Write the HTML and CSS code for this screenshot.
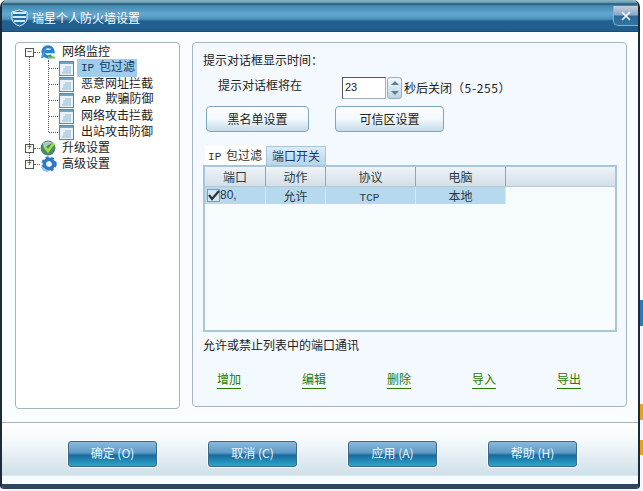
FILE: index.html
```html
<!DOCTYPE html>
<html lang="zh">

<head>
    <meta charset="UTF-8">
    <title>瑞星个人防火墙设置</title>
    <link rel="stylesheet" href="styles.css">
</head>

<body>
    <div class="window">
        <div class="titlebar">
            <svg class="title-icon" width="17" height="18" viewBox="0 0 17 18">
                <path d="M1 3 L8.5 1 L16 3 L16 10 Q15 15 8.5 17 Q2 15 1 10 Z" fill="#1f6fa8" stroke="#e8f4fb"/>
                <path d="M2 4 H15 M2 8 H15 M3 12 H14" stroke="#cfeaf8" stroke-width="2"/>
            </svg>
            <span class="title-text">瑞星个人防火墙设置</span>
            <div class="close-btn">
                <svg width="10" height="10" viewBox="0 0 10 10">
                    <path d="M1 1 L9 9 M9 1 L1 9" stroke="#fff" stroke-width="1.6"/>
                </svg>
            </div>
        </div>

        <div class="main">
            <div class="tree-panel">
                <div class="guide guide-root"></div>
                <div class="guide guide-child"></div>

                <div class="tree-row">
                    <span class="expander">−</span><span class="dots"></span>
                    <svg class="node-icon" width="18" height="16" viewBox="0 0 18 16">
                        <path d="M4 7.5 H13 A5 5 0 1 0 11.5 11.5" fill="none" stroke="#2a80d2" stroke-width="3.4"/>
                        <path d="M6 5 H11" stroke="#bfe3f8"/>
                        <path d="M1 14 Q2 8 7 3 Q4 9 3.5 14 Z" fill="#3f9bd8"/>
                        <path d="M8 12.5 H15 V14.5 H8 Z" fill="#7cc23e"/>
                    </svg>
                    <span class="node-label">网络监控</span>
                </div>
                <div class="tree-row child">
                    <span class="dots long"></span>
                    <svg class="doc-icon" width="15" height="15" viewBox="0 0 15 15"><use href="#doc"/></svg>
                    <span class="node-label selected"><span class="latin">IP</span> 包过滤</span>
                </div>
                <div class="tree-row child">
                    <span class="dots long"></span>
                    <svg class="doc-icon" width="15" height="15" viewBox="0 0 15 15"><use href="#doc"/></svg>
                    <span class="node-label">恶意网址拦截</span>
                </div>
                <div class="tree-row child">
                    <span class="dots long"></span>
                    <svg class="doc-icon" width="15" height="15" viewBox="0 0 15 15"><use href="#doc"/></svg>
                    <span class="node-label"><span class="latin">ARP</span> 欺骗防御</span>
                </div>
                <div class="tree-row child">
                    <span class="dots long"></span>
                    <svg class="doc-icon" width="15" height="15" viewBox="0 0 15 15"><use href="#doc"/></svg>
                    <span class="node-label">网络攻击拦截</span>
                </div>
                <div class="tree-row child">
                    <span class="dots long"></span>
                    <svg class="doc-icon" width="15" height="15" viewBox="0 0 15 15"><use href="#doc"/></svg>
                    <span class="node-label">出站攻击防御</span>
                </div>
                <div class="tree-row">
                    <span class="expander">+</span><span class="dots"></span>
                    <svg class="node-icon" width="18" height="16" viewBox="0 0 18 16">
                        <circle cx="8" cy="8" r="7.5" fill="#4a8a6c"/>
                        <path d="M3 3 Q8 0 13 3 Q8 4 4 9 Z" fill="#a9cfc0"/>
                        <path d="M5 7 L8 11 L14 3" fill="none" stroke="#a4e03c" stroke-width="2.6"/>
                    </svg>
                    <span class="node-label">升级设置</span>
                </div>
                <div class="tree-row">
                    <span class="expander">+</span><span class="dots"></span>
                    <svg class="node-icon" width="18" height="16" viewBox="0 0 18 16">
                        <circle cx="9" cy="8" r="4.6" fill="none" stroke="#2f78c8" stroke-width="3.6"/>
                        <circle cx="9" cy="8" r="6.6" fill="none" stroke="#2f78c8" stroke-width="2.2" stroke-dasharray="3 2.5"/>
                        <circle cx="9" cy="8" r="2.4" fill="#e8f4fc"/>
                        <path d="M2 11 Q4 15 8 15" fill="none" stroke="#8cc8f0" stroke-width="2"/>
                    </svg>
                    <span class="node-label">高级设置</span>
                </div>

                <svg class="defs" width="0" height="0">
                    <symbol id="doc" viewBox="0 0 15 15">
                        <rect x="0.5" y="0.5" width="14" height="14" fill="#e6f1f8" stroke="#4f89ad"/>
                        <rect x="1" y="1" width="13" height="2" fill="#6ea5c6"/>
                        <path d="M6 6 H12 M4.5 8 H12 M4 10 H12 M3 12 H12" stroke="#8fb6cf"/>
                    </symbol>
                </svg>
            </div>

            <div class="settings-panel">
                <div class="section-title">提示对话框显示时间：</div>

                <div class="timeout-row">
                    <span class="timeout-label">提示对话框将在</span>
                    <span class="num-input">23</span>
                    <span class="spinner">
                        <span class="spin up"></span>
                        <span class="spin down"></span>
                    </span>
                    <span class="timeout-hint">秒后关闭<span class="wide">（5-255）</span></span>
                </div>

                <div class="action-row">
                    <button class="soft-btn black">黑名单设置</button>
                    <button class="soft-btn trust">可信区设置</button>
                </div>

                <div class="tabs">
                    <div class="tab"><span class="latin">IP</span> 包过滤</div>
                    <div class="tab active">端口开关</div>
                </div>

                <div class="list">
                    <div class="list-head">
                        <div class="cell c-port">端口</div>
                        <div class="cell c-action">动作</div>
                        <div class="cell c-proto">协议</div>
                        <div class="cell c-pc">电脑</div>
                    </div>
                    <div class="list-row">
                        <div class="cell c-port left">
                            <svg class="check" width="13" height="13" viewBox="0 0 13 13">
                                <rect x="0.5" y="0.5" width="12" height="12" fill="#d5e6f2" stroke="#7d9cb3"/>
                                <path d="M2 6 L5 10 L12 2" fill="none" stroke="#26323c" stroke-width="2.2"/>
                            </svg>80,
                        </div>
                        <div class="cell c-action">允许</div>
                        <div class="cell c-proto"><span class="latin">TCP</span></div>
                        <div class="cell c-pc">本地</div>
                    </div>
                </div>

                <div class="note">允许或禁止列表中的端口通讯</div>

                <div class="links">
                    <a class="link">增加</a>
                    <a class="link">编辑</a>
                    <a class="link">删除</a>
                    <a class="link">导入</a>
                    <a class="link">导出</a>
                </div>
            </div>
        </div>

        <div class="footer">
            <button class="blue-btn">确定 (O)</button>
            <button class="blue-btn">取消 (C)</button>
            <button class="blue-btn">应用 (A)</button>
            <button class="blue-btn">帮助 (H)</button>
        </div>
    </div>
</body>

</html>
```

FILE: styles.css
```css
html,
body {
    margin: 0;
    height: 100%;
}

body {
    width: 643px;
    height: 491px;
    overflow: hidden;
    font-family: "Noto Sans CJK SC", "Liberation Sans", sans-serif;
    font-size: 12px;
    color: #222;
    background: linear-gradient(180deg,
            #ffffff 0, #ffffff 300px,
            #2f78b8 300px, #2f78b8 326px,
            #f4f8fb 326px, #f4f8fb 404px,
            #e8a020 404px, #e8a020 420px,
            #f4f8fb 420px, #f4f8fb 440px,
            #e8a020 440px, #e8a020 455px,
            #f4f8fb 455px);
}

.window {
    box-sizing: border-box;
    width: 640px;
    height: 489px;
    display: flex;
    flex-direction: column;
    background: #f9fdff;
    border: solid #1c2a38;
    border-width: 0 2px 0 2px;
    border-radius: 7px 7px 4px 4px;
    overflow: hidden;
}

.latin {
    font-family: "Liberation Mono", monospace;
    font-size: 11px;
    margin-right: 2px;
}

/* title bar */
.titlebar {
    box-sizing: border-box;
    height: 32px;
    flex: none;
    display: flex;
    align-items: center;
    padding: 5px 0 0 9px;
    border-bottom: 1px solid #1d4c70;
    background: linear-gradient(180deg,
            #8cb6c8 0, #5f97ae 3px, #1c3f58 4px,
            #3f86ae 5px, #62a8cf 14px, #4f93bd 19px,
            #22618f 21px, #1f5d8c 31px);
}

.title-icon {
    flex: none;
}

.title-text {
    margin-left: 4px;
    padding-bottom: 2px;
    color: #fff;
    font-size: 12px;
    flex: 1;
}

.close-btn {
    width: 24px;
    height: 19px;
    margin: -4px 0 0 0;
    border-radius: 0 0 0 5px;
    border: 1px solid #7fb0cc;
    border-width: 0 0 1px 1px;
    display: flex;
    align-items: center;
    justify-content: center;
    background: linear-gradient(180deg, #c7cede 0, #8da9c8 45%, #2c6a98 55%, #2f75a6 100%);
}

/* panels */
.main {
    flex: none;
    height: 390px;
    box-sizing: border-box;
    display: flex;
    align-items: flex-start;
    padding: 10px 0 0 13px;
    gap: 12px;
}

.tree-panel {
    box-sizing: border-box;
    position: relative;
    width: 165px;
    height: 367px;
    padding-top: 1px;
    background: #fff;
    border: 1px solid #a3b5c0;
    border-radius: 4px;
}

.guide {
    position: absolute;
    border-left: 1px dotted #555;
}

.guide-root {
    left: 13px;
    top: 13px;
    height: 106px;
}

.guide-child {
    left: 32px;
    top: 17px;
    height: 72px;
}

.defs {
    position: absolute;
}

.tree-row {
    height: 16px;
    display: flex;
    align-items: center;
    padding-left: 9px;
    white-space: nowrap;
}

.tree-row.child {
    padding-left: 33px;
}

.expander {
    box-sizing: border-box;
    width: 9px;
    height: 9px;
    flex: none;
    border: 1px solid #555;
    background: #fff;
    display: flex;
    align-items: center;
    justify-content: center;
    font-family: "Liberation Mono", monospace;
    font-size: 9px;
    line-height: 7px;
    color: #222;
    z-index: 1;
}

.dots {
    width: 6px;
    flex: none;
    border-top: 1px dotted #555;
}

.dots.long {
    width: 9px;
}

.node-icon {
    flex: none;
}

.doc-icon {
    flex: none;
    margin-left: 1px;
}

.node-label {
    margin-left: 4px;
    padding-bottom: 2px;
    line-height: 14px;
}

.tree-row.child .node-label {
    margin-left: 3px;
    padding-left: 4px;
}

.node-label.selected {
    box-sizing: border-box;
    width: 60px;
    background: #9fcdeb;
    color: #123a5a;
}

.settings-panel {
    box-sizing: border-box;
    width: 435px;
    height: 365px;
    padding: 9px 10px 0 10px;
    background: #f3f9fe;
    border: 1px solid #a3b5c0;
    border-radius: 4px;
}

.section-title {
    height: 16px;
    line-height: 16px;
}

.timeout-row {
    display: flex;
    align-items: center;
    height: 22px;
    margin-top: 9px;
    padding-left: 15px;
}

.timeout-label {
    width: 124px;
    flex: none;
    margin-bottom: 8px;
}

.num-input {
    box-sizing: border-box;
    width: 44px;
    height: 22px;
    padding-left: 2px;
    line-height: 18px;
    font-family: "Liberation Sans", sans-serif;
    font-size: 11px;
    background: #fff;
    border: 1px solid #9fb0bc;
    border-left-color: #555;
    border-top-color: #555;
}

.spinner {
    box-sizing: border-box;
    width: 15px;
    height: 22px;
    margin-left: 1px;
    display: flex;
    flex-direction: column;
    border: 1px solid #8fb0c6;
    border-radius: 3px;
    background: linear-gradient(180deg, #f2f8fc, #bcd4e4);
}

.spin {
    flex: 1;
    display: flex;
    align-items: center;
    justify-content: center;
}

.spin::before {
    content: "";
    border-left: 4px solid transparent;
    border-right: 4px solid transparent;
}

.spin.up::before {
    border-bottom: 4px solid #5f7f96;
}

.spin.down::before {
    border-top: 4px solid #5f7f96;
}

.timeout-hint {
    margin-left: 2px;
    margin-bottom: 2px;
    white-space: nowrap;
}

.wide {
    letter-spacing: 0.6px;
}

.action-row {
    display: flex;
    height: 26px;
    margin-top: 7px;
    padding-left: 3px;
}

.soft-btn {
    box-sizing: border-box;
    height: 26px;
    padding: 0 0 2px;
    font-family: inherit;
    font-size: 12px;
    color: #222;
    background: linear-gradient(180deg, #ffffff 0, #f2f8fc 50%, #c5dbea 100%);
    border: 1px solid #7ea7bf;
    border-radius: 4px;
}

.soft-btn.black {
    width: 103px;
}

.soft-btn.trust {
    width: 109px;
    margin-left: 26px;
}

/* tabs + list */
.tabs {
    display: flex;
    height: 19px;
    margin-top: 14px;
    padding-left: 2px;
}

.tab {
    width: 60px;
    line-height: 17px;
    text-align: center;
    color: #333;
    background: #fff;
}

.tab.active {
    margin-left: 1px;
    color: #17376b;
    background: linear-gradient(180deg, #dcecf7, #b4d6ec);
    border: solid #a8c6d8;
    border-width: 1px 1px 0 1px;
    box-sizing: border-box;
}

.list {
    box-sizing: border-box;
    width: 414px;
    height: 167px;
    background: #f6fbfe;
    border: 2px solid #a8c6d8;
}

.list-head {
    display: flex;
    height: 20px;
    box-sizing: border-box;
    background: linear-gradient(180deg, #eef3f7, #d4dfe8);
    border-bottom: 1px solid #b5c7d4;
}

.list-head .cell {
    border-right: 1px solid #8fa5b8;
    line-height: 19px;
}

.list-row {
    display: flex;
    width: 301px;
    height: 17px;
    background: #b7d9ee;
}

.list-row .cell {
    border-right: 1px solid #d6e9f5;
}

.cell {
    box-sizing: border-box;
    flex: none;
    text-align: center;
    line-height: 17px;
    color: #2b3a44;
}

.cell.left {
    text-align: left;
    display: flex;
    align-items: center;
    padding-left: 2px;
    font-family: "Liberation Sans", sans-serif;
}

.c-port {
    width: 61px;
}

.c-action {
    width: 60px;
}

.c-proto {
    width: 90px;
}

.c-pc {
    width: 90px;
}

.check {
    flex: none;
}

.note {
    height: 16px;
    line-height: 16px;
    margin-top: 5px;
}

.links {
    display: flex;
    margin-top: 18px;
    padding-left: 14px;
    gap: 61px;
}

.link {
    color: #2a7a00;
    line-height: 16px;
    padding-bottom: 1px;
    border-bottom: 1px solid #2a7a00;
}

/* bottom buttons */
.footer {
    box-sizing: border-box;
    flex: 1;
    display: flex;
    align-items: flex-start;
    gap: 51px;
    padding: 18px 0 0 66px;
    border-top: 1px solid #a3b3bd;
    border-bottom: 5px solid #2f4560;
    background: linear-gradient(180deg, #ffffff 0, #f4f9fb 30%, #cfe0e9 85%, #f4fafd 88%, #f9fdff 100%);
}

.blue-btn {
    box-sizing: border-box;
    width: 89px;
    height: 26px;
    padding: 0 0 3px;
    font-family: inherit;
    font-size: 12px;
    color: #e8f6ff;
    background: linear-gradient(180deg, #8cb9da 0, #5c9ac6 45%, #1a6a9e 55%, #2aa8cc 100%);
    border: 1px solid #3c6a8a;
    border-radius: 3px;
    box-shadow: 0 0 0 1px #fff;
}
```
